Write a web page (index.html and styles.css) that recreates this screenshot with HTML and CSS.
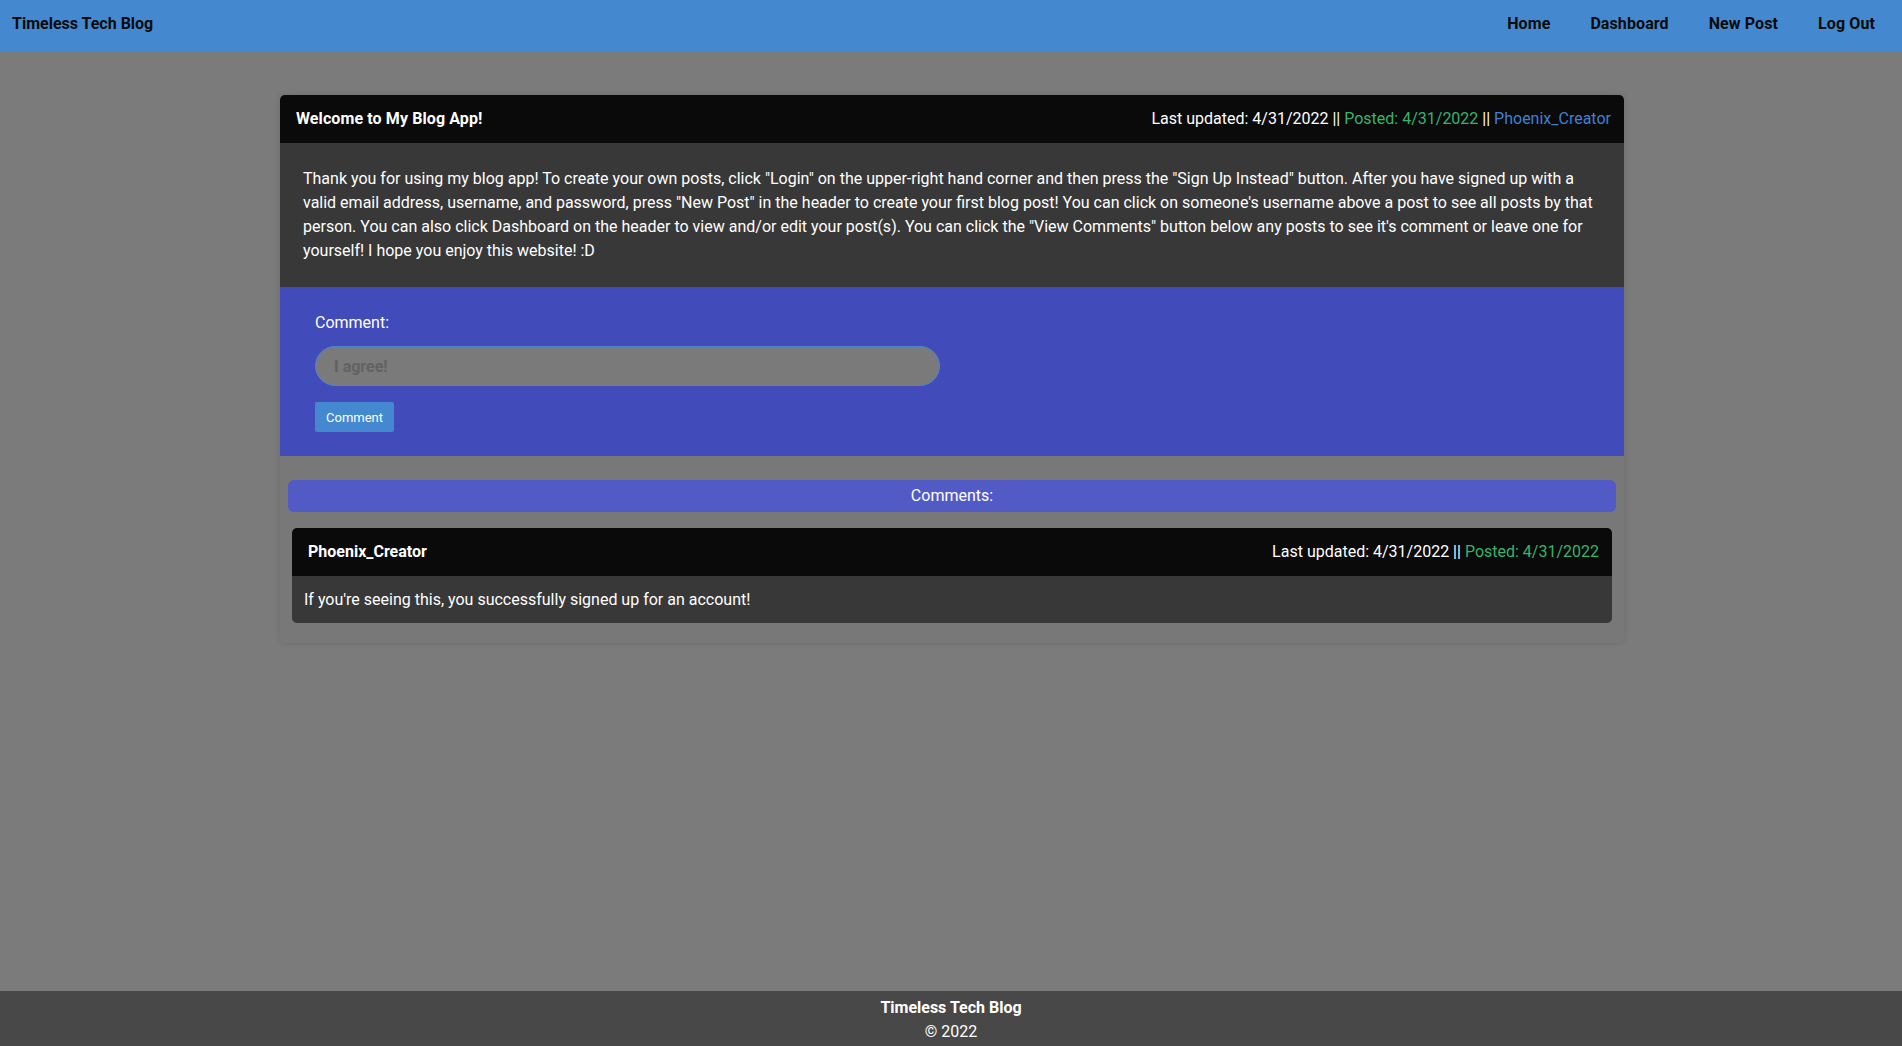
FILE: index.html
```html
<!DOCTYPE html>
<html lang="en">
<head>
<meta charset="utf-8">
<title>Timeless Tech Blog</title>
<link rel="stylesheet" href="styles.css">
</head>
<body>
<header class="navbar">
  <a class="brand" href="#">Timeless Tech Blog</a>
  <nav class="nav-links">
    <a href="#">Home</a>
    <a href="#">Dashboard</a>
    <a href="#">New Post</a>
    <a href="#">Log Out</a>
  </nav>
</header>

<main class="main">
  <article class="post-card">
    <div class="post-header">
      <h2 class="post-title">Welcome to My Blog App!</h2>
      <div class="post-meta">Last updated: 4/31/2022 || <span class="posted">Posted: 4/31/2022</span> || <a class="author" href="#">Phoenix_Creator</a></div>
    </div>
    <div class="post-body">
      <p>Thank you for using my blog app! To create your own posts, click "Login" on the upper-right hand corner and then press the "Sign Up Instead" button. After you have signed up with a valid email address, username, and password, press "New Post" in the header to create your first blog post! You can click on someone's username above a post to see all posts by that person. You can also click Dashboard on the header to view and/or edit your post(s). You can click the "View Comments" button below any posts to see it's comment or leave one for yourself! I hope you enjoy this website! :D</p>
    </div>
    <form class="comment-form">
      <label class="comment-label" for="comment">Comment:</label>
      <input class="comment-input" id="comment" type="text" placeholder="I agree!">
      <button class="comment-btn" type="button">Comment</button>
    </form>
    <div class="comments">
      <div class="comments-title">Comments:</div>
      <div class="comment-card">
        <div class="comment-header">
          <span class="comment-author">Phoenix_Creator</span>
          <span class="comment-meta">Last updated: 4/31/2022 || <span class="posted">Posted: 4/31/2022</span></span>
        </div>
        <div class="comment-body">If you're seeing this, you successfully signed up for an account!</div>
      </div>
    </div>
  </article>
</main>

<footer class="footer">
  <div class="footer-title">Timeless Tech Blog</div>
  <div class="footer-copy">© 2022</div>
</footer>
</body>
</html>
```

FILE: styles.css
```css
* { box-sizing: border-box; }

html, body { height: 100%; }

body {
  margin: 0;
  font-family: Roboto, "Liberation Sans", sans-serif;
  font-size: 16px;
  line-height: 24px;
  color: #fff;
  background: #7b7b7b;
  display: flex;
  flex-direction: column;
}

a { text-decoration: none; }

.navbar {
  height: 51px;
  background: #4489cf;
  display: flex;
  align-items: center;
  justify-content: space-between;
  padding: 0 27px 4px 12px;
  flex-shrink: 0;
}

.brand {
  color: #0b0b0b;
  font-weight: 700;
  font-size: 16px;
}

.nav-links {
  display: flex;
  gap: 40px;
}

.nav-links a {
  color: #0b0b0b;
  font-weight: 700;
  letter-spacing: 0.1px;
}

.main {
  flex: 1;
  padding: 44px 0 0 2px;
}

.post-card {
  width: 1344px;
  margin: 0 auto;
  background: #787878;
  border-radius: 5px;
  box-shadow: 0 0 6px rgba(0, 0, 0, 0.12);
  padding-bottom: 20px;
}

.post-header,
.comment-header {
  height: 48px;
  background: #0a0a0a;
  display: flex;
  align-items: center;
  justify-content: space-between;
  padding: 0 13px 0 16px;
  border-radius: 5px 5px 0 0;
}

.post-title {
  margin: 0;
  font-size: 16px;
  font-weight: 700;
  letter-spacing: 0.1px;
}

.posted { color: #36b46c; }

.author { color: #3f80d6; }

.post-body {
  background: #383838;
  padding: 24px 24px 24px 23px;
}

.post-body p {
  margin: 0;
}

.comment-form {
  background: #414bb9;
  padding: 24px 35px 24px 35px;
  display: flex;
  flex-direction: column;
  align-items: flex-start;
}

.comment-label {
  line-height: 24px;
  margin-bottom: 11px;
}

.comment-input {
  width: 625px;
  height: 40px;
  border-radius: 20px;
  border: 1px solid #4a86d0;
  background: #7a7a7a;
  padding: 0 18px;
  font-family: inherit;
  font-size: 16px;
  font-weight: 700;
  color: #333;
  outline: none;
  margin-bottom: 16px;
}

.comment-input::placeholder {
  color: #626262;
  font-weight: 700;
}

.comment-btn {
  height: 30px;
  padding: 0 11px;
  border: none;
  border-radius: 2px;
  background: #4489cf;
  color: #fff;
  font-family: inherit;
  font-size: 13px;
}

.comments {
  padding: 24px 8px 0;
}

.comments-title {
  height: 32px;
  line-height: 32px;
  background: #525ac6;
  border-radius: 6px;
  text-align: center;
  margin-bottom: 16px;
}

.comment-card {
  margin: 0 4px;
  border-radius: 5px;
  overflow: hidden;
  background: #383838;
}

.comment-author { font-weight: 700; }

.comment-body {
  height: 47px;
  display: flex;
  align-items: center;
  padding: 0 12px;
}

.footer {
  height: 55px;
  background: #484848;
  text-align: center;
  padding-top: 5px;
  flex-shrink: 0;
}

.footer-title { font-weight: 700; }
```
